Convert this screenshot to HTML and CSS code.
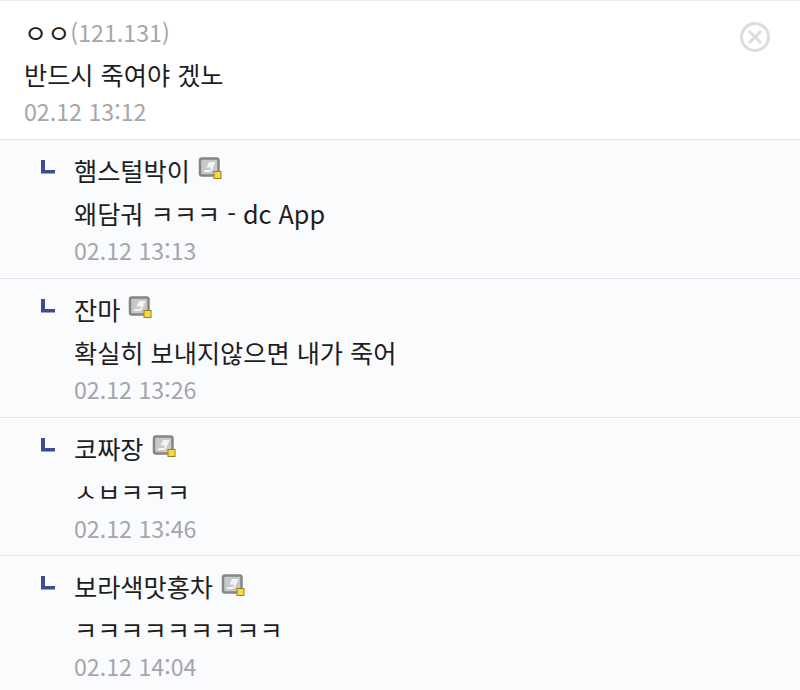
FILE: index.html
```html
<!DOCTYPE html>
<html lang="ko">
<head>
<meta charset="utf-8">
<title>댓글</title>
<link rel="stylesheet" href="styles.css">
</head>
<body>
<ul class="comments">
  <li class="comment">
    <div class="body">
      <p class="author">ㅇㅇ<span class="ip">(121.131)</span></p>
      <p class="text">반드시 죽여야 겠노</p>
      <p class="date">02.12 13:12</p>
    </div>
    <button class="delete" aria-label="삭제">
      <svg viewBox="0 0 32 32" width="32" height="32"><circle cx="16" cy="16" r="13.500"/><path d="M10 10l12 12M22 10l-12 12"/></svg>
    </button>
  </li>
  <li class="comment reply">
    <svg class="arrow" viewBox="0 0 16 16" width="16" height="16"><path d="M1 1h4v10h10v3.500H1z"/></svg>
    <div class="body">
      <p class="author">햄스털박이<svg class="badge" viewBox="0 0 24 24" width="24" height="24"><use href="#gallog"/></svg></p>
      <p class="text">왜담궈 ㅋㅋㅋ - dc App</p>
      <p class="date">02.12 13:13</p>
    </div>
  </li>
  <li class="comment reply">
    <svg class="arrow" viewBox="0 0 16 16" width="16" height="16"><path d="M1 1h4v10h10v3.500H1z"/></svg>
    <div class="body">
      <p class="author">잔마<svg class="badge" viewBox="0 0 24 24" width="24" height="24"><use href="#gallog"/></svg></p>
      <p class="text">확실히 보내지않으면 내가 죽어</p>
      <p class="date">02.12 13:26</p>
    </div>
  </li>
  <li class="comment reply">
    <svg class="arrow" viewBox="0 0 16 16" width="16" height="16"><path d="M1 1h4v10h10v3.500H1z"/></svg>
    <div class="body">
      <p class="author">코짜장<svg class="badge" viewBox="0 0 24 24" width="24" height="24"><use href="#gallog"/></svg></p>
      <p class="text">ㅅㅂㅋㅋㅋ</p>
      <p class="date">02.12 13:46</p>
    </div>
  </li>
  <li class="comment reply">
    <svg class="arrow" viewBox="0 0 16 16" width="16" height="16"><path d="M1 1h4v10h10v3.500H1z"/></svg>
    <div class="body">
      <p class="author">보라색맛홍차<svg class="badge" viewBox="0 0 24 24" width="24" height="24"><use href="#gallog"/></svg></p>
      <p class="text">ㅋㅋㅋㅋㅋㅋㅋㅋㅋ</p>
      <p class="date">02.12 14:04</p>
    </div>
  </li>
</ul>
<!-- Shared gallog badge: grey tile with a pale italic g and a yellow corner square -->
<svg class="defs" width="0" height="0">
  <symbol id="gallog" viewBox="0 0 24 24">
    <rect x="2" y="1.500" width="18.500" height="17" rx="2" fill="#c8c8c8" stroke="#858585" stroke-width="2.500"/>
    <path d="M5.500 15l1.500-2h5l1-2.500H8.500L11 5h6.500L14 13.500 12 15z" fill="#f4f4f4"/>
    <rect x="16" y="14.500" width="7" height="7" fill="#f7d93a" stroke="#94812a"/>
  </symbol>
</svg>
</body>
</html>
```
FILE: styles.css
```css
* {
  box-sizing: border-box;
}

html, body {
  margin: 0;
  padding: 0;
  background: #fff;
}

body {
  font-family: "Noto Sans CJK KR", "Noto Sans", sans-serif;
  color: #1e1e1e;
}

.comments {
  list-style: none;
  margin: 0;
  padding: 0;
  height: 690px;
  overflow: hidden;
  border-top: 1px solid #eceef0;
}

.comment {
  display: flex;
  height: 138.850px;
  padding: 10px 29px 0 24px;
  border-bottom: 1px solid #e2e4e8;
}

.reply {
  background: #fafbfd;
  padding-top: 9px;
  padding-left: 40px;
}

.reply:last-child {
  border-bottom: 0;
}

.arrow {
  flex: none;
  margin: 10px 18px 0 0;
  fill: #3d4a96;
}

.body {
  flex: 1;
}

.body p {
  margin: 0;
  white-space: nowrap;
}

.author, .text {
  font-size: 25.200px;
  line-height: 42px;
  display: flex;
  align-items: center;
}

.text {
  line-height: 43px;
}

.reply .text {
  line-height: 44px;
}

.date, .ip {
  color: #a4a6aa;
  font-size: 23.200px;
}

.date {
  line-height: 30px;
}

.reply .date {
  line-height: 31px;
}

.badge {
  margin: -1px 0 0 8px;
}

.delete {
  flex: none;
  align-self: flex-start;
  margin: 10px 0 0;
  padding: 0;
  border: 0;
  background: none;
  width: 32px;
  height: 32px;
}

.delete svg {
  display: block;
  fill: none;
  stroke: #dcdcdc;
  stroke-width: 3;
}

.defs {
  position: absolute;
}
```
